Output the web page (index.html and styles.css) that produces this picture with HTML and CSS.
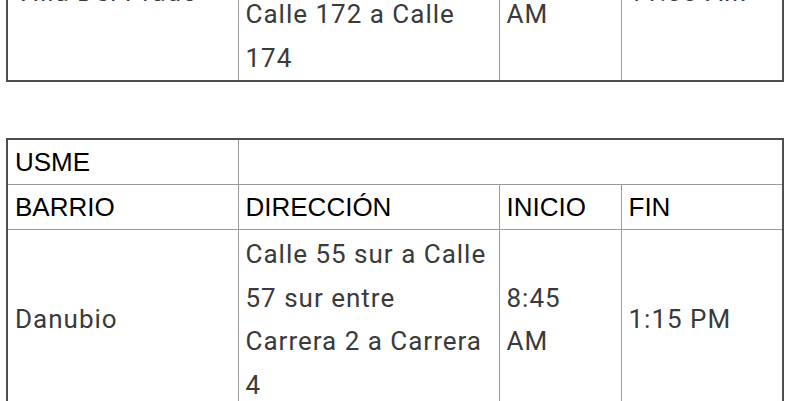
FILE: index.html
```html
<!DOCTYPE html>
<html lang="es">
<head>
<meta charset="utf-8">
<title>Horarios</title>
<link rel="stylesheet" href="styles.css">
</head>
<body>
<div class="page">
  <table class="sched sched-top">
    <colgroup>
      <col class="c1"><col class="c2"><col class="c3"><col class="c4">
    </colgroup>
    <tbody>
      <tr class="data">
        <td>Villa Del Prado</td>
        <td>Carrera 7 entre<br>Calle 170 y<br>Calle 172 a Calle<br>174</td>
        <td>7:00<br>AM</td>
        <td>11:00 AM</td>
      </tr>
    </tbody>
  </table>

  <table class="sched sched-usme">
    <colgroup>
      <col class="c1"><col class="c2"><col class="c3"><col class="c4">
    </colgroup>
    <tbody>
      <tr class="head">
        <td>USME</td>
        <td colspan="3"></td>
      </tr>
      <tr class="head">
        <td>BARRIO</td>
        <td>DIRECCIÓN</td>
        <td>INICIO</td>
        <td>FIN</td>
      </tr>
      <tr class="data">
        <td>Danubio</td>
        <td>Calle 55 sur a Calle<br>57 sur entre<br>Carrera 2 a Carrera<br>4</td>
        <td>8:45<br>AM</td>
        <td>1:15 PM</td>
      </tr>
    </tbody>
  </table>
</div>
</body>
</html>
```

FILE: styles.css
```css
html, body {
  margin: 0;
  padding: 0;
  background: #ffffff;
}

body {
  overflow: hidden;
}

.page {
  padding: 0 9px 0 6px;
}

.sched {
  width: 100%;
  border-collapse: collapse;
  table-layout: fixed;
  border: 2px solid #4f4f4f;
}

.sched-top {
  margin-top: -99px;
}

.sched-usme {
  margin-top: 56px;
}

.c1 { width: 231px; }
.c2 { width: 261px; }
.c3 { width: 122px; }
.c4 { width: 162px; }

.sched td {
  border: 1px solid #9a9a9a;
  padding: 0 7px;
  vertical-align: middle;
  text-align: left;
}

.head td {
  font-family: "Liberation Sans", Arial, sans-serif;
  font-size: 26px;
  line-height: 44px;
  color: #000000;
  height: 44px;
}

.data td {
  font-family: Roboto, "Noto Sans", sans-serif;
  font-size: 26px;
  line-height: 43.5px;
  letter-spacing: 1px;
  color: #3a3a3a;
  padding-top: 3px;
  padding-bottom: 0;
}
```
